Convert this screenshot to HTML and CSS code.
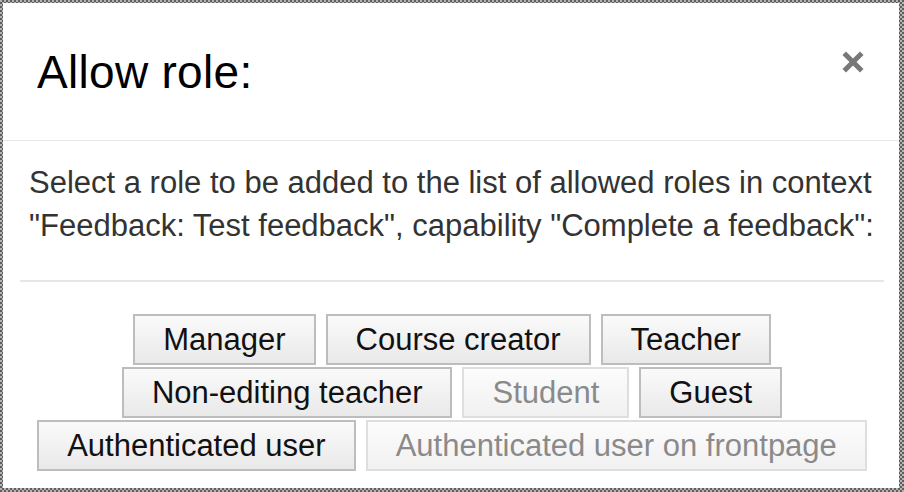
FILE: index.html
```html
<!DOCTYPE html>
<html lang="en">
<head>
<meta charset="utf-8">
<title>Allow role</title>
<link rel="stylesheet" href="styles.css">
</head>
<body>
<div class="dialog">
  <div class="dialog-header">
    <h1 class="dialog-title">Allow role:</h1>
    <button class="close" aria-label="Close">
      <svg width="24" height="24" viewBox="0 0 24 24"><path d="M5 5 L19 19 M19 5 L5 19" stroke="#787878" stroke-width="5" stroke-linecap="square" fill="none"/></svg>
    </button>
  </div>
  <div class="dialog-body">
    <p class="intro">Select a role to be added to the list of allowed roles in context<br>"Feedback: Test feedback", capability "Complete a feedback":</p>
    <hr class="divider">
    <div class="roles">
      <button class="role">Manager</button>
      <button class="role">Course creator</button>
      <button class="role">Teacher</button>
      <button class="role">Non-editing teacher</button>
      <button class="role" disabled>Student</button>
      <button class="role">Guest</button>
      <button class="role">Authenticated user</button>
      <button class="role" disabled>Authenticated user on frontpage</button>
    </div>
  </div>
</div>
</body>
</html>
```
FILE: styles.css
```css
html, body {
  margin: 0;
  padding: 0;
}
body {
  width: 904px;
  height: 492px;
  overflow: hidden;
  background: repeating-conic-gradient(#5e5e5e 0 25%, #b4b4b4 0 50%) 0 0 / 4px 4px;
  font-family: "Helvetica Neue", "Liberation Sans", Arial, sans-serif;
}
.dialog {
  margin: 3px 0 0 3px;
  width: 896px;
  height: 485px;
  background: #fff;
  display: flex;
  flex-direction: column;
}
.dialog-header {
  height: 137px;
  border-bottom: 1px solid #e6e6e6;
  display: flex;
  align-items: center;
  justify-content: space-between;
  padding: 0 34px 0 34px;
}
.dialog-title {
  margin: 0;
  font-size: 46px;
  font-weight: normal;
  color: #000;
  letter-spacing: 0.3px;
}
.close {
  border: 0;
  background: none;
  padding: 0;
  margin: -20px 0 0 0;
  width: 24px;
  height: 24px;
  cursor: pointer;
}
.close svg { display: block; }
.dialog-body {
  padding: 0 15px 0 17px;
}
.intro {
  margin: 20px 0 0 9px;
  font-size: 31px;
  line-height: 43px;
  color: #333;
  white-space: nowrap;
}
.divider {
  margin: 33px 0 0 0;
  border: 0;
  border-top: 2px solid #e6e6e6;
}
.roles {
  margin-top: 32px;
  display: flex;
  flex-wrap: wrap;
  justify-content: center;
  column-gap: 10px;
  row-gap: 2px;
}
.role {
  font-family: "Helvetica Neue", "Liberation Sans", Arial, sans-serif;
  font-size: 31px;
  height: 51px;
  padding: 0 28px;
  color: #111;
  border: 2px solid #bdbdbd;
  border-radius: 0;
  background: linear-gradient(#fafafa, #e9e9e9);
}
.role:disabled {
  color: #8a8a8a;
  border-color: #dedede;
  background: linear-gradient(#fcfcfc, #f1f1f1);
}
```
